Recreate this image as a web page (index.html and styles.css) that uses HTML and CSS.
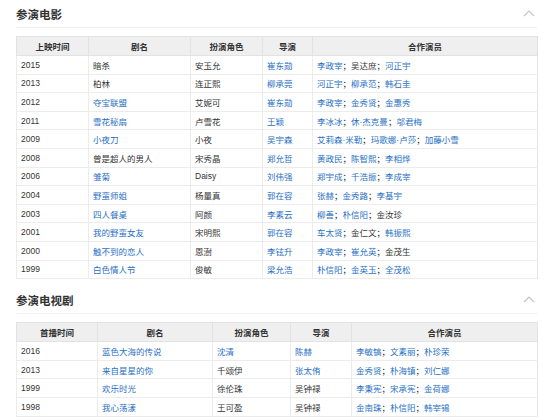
FILE: index.html
```html
<!DOCTYPE html>
<html lang="zh">
<head>
<meta charset="utf-8">
<title>参演作品</title>
<link rel="stylesheet" href="styles.css">
</head>
<body>
<div class="page">
  <section class="section">
    <div class="sec-head">
      <h2 class="sec-title">参演电影</h2>
      <svg class="chev" width="12" height="7" viewBox="0 0 12 7"><polyline points="1,6 6,1 11,6" fill="none" stroke="#c4c4c4" stroke-width="1.2"/></svg>
    </div>
    <table class="works">
      <colgroup><col class="m1"><col class="m2"><col class="m3"><col class="m4"><col class="m5"></colgroup>
      <thead><tr><th>上映时间</th><th>剧名</th><th>扮演角色</th><th>导演</th><th>合作演员</th></tr></thead>
      <tbody>
        <tr><td>2015</td><td>暗杀</td><td>安玉允</td><td><a>崔东勋</a></td><td><a>李政宰</a>；吴达庶；<a>河正宇</a></td></tr>
        <tr><td>2013</td><td>柏林</td><td>连正熙</td><td><a>柳承莞</a></td><td><a>河正宇</a>；<a>柳承范</a>；<a>韩石圭</a></td></tr>
        <tr><td>2012</td><td><a>夺宝联盟</a></td><td>艾妮可</td><td><a>崔东勋</a></td><td><a>李政宰</a>；<a>金秀贤</a>；<a>金惠秀</a></td></tr>
        <tr><td>2011</td><td><a>雪花秘扇</a></td><td>卢雪花</td><td><a>王颖</a></td><td><a>李冰冰</a>；<a>休·杰克曼</a>；<a>邬君梅</a></td></tr>
        <tr><td>2009</td><td><a>小夜刀</a></td><td>小夜</td><td><a>吴宇森</a></td><td><a>艾莉森·米勒</a>；<a>玛歌娜·卢莎</a>；<a>加藤小雪</a></td></tr>
        <tr><td>2008</td><td>曾是超人的男人</td><td>宋秀晶</td><td><a>郑允哲</a></td><td><a>黄政民</a>；<a>陈智熙</a>；<a>李相烨</a></td></tr>
        <tr><td>2006</td><td><a>雏菊</a></td><td>Daisy</td><td><a>刘伟强</a></td><td><a>郑宇成</a>；<a>千浩振</a>；<a>李成宰</a></td></tr>
        <tr><td>2004</td><td><a>野蛮师姐</a></td><td>杨量真</td><td><a>郭在容</a></td><td><a>张赫</a>；<a>金秀路</a>；<a>李基宇</a></td></tr>
        <tr><td>2003</td><td><a>四人餐桌</a></td><td>阿颜</td><td><a>李素云</a></td><td><a>柳善</a>；<a>朴信阳</a>；金汝珍</td></tr>
        <tr><td>2001</td><td><a>我的野蛮女友</a></td><td>宋明熙</td><td><a>郭在容</a></td><td><a>车太贤</a>；金仁文；<a>韩振熙</a></td></tr>
        <tr><td>2000</td><td><a>触不到的恋人</a></td><td>恩澍</td><td><a>李铉升</a></td><td><a>李政宰</a>；<a>崔允英</a>；金茂生</td></tr>
        <tr><td>1999</td><td><a>白色情人节</a></td><td>俊敏</td><td><a>梁允浩</a></td><td><a>朴信阳</a>；<a>金英玉</a>；<a>全茂松</a></td></tr>
      </tbody>
    </table>
  </section>
  <section class="section">
    <div class="sec-head">
      <h2 class="sec-title">参演电视剧</h2>
      <svg class="chev" width="12" height="7" viewBox="0 0 12 7"><polyline points="1,6 6,1 11,6" fill="none" stroke="#c4c4c4" stroke-width="1.2"/></svg>
    </div>
    <table class="works">
      <colgroup><col class="t1"><col class="t2"><col class="t3"><col class="t4"><col class="t5"></colgroup>
      <thead><tr><th>首播时间</th><th>剧名</th><th>扮演角色</th><th>导演</th><th>合作演员</th></tr></thead>
      <tbody>
        <tr><td>2016</td><td><a>蓝色大海的传说</a></td><td><a>沈清</a></td><td><a>陈赫</a></td><td><a>李敏镐</a>；<a>文素丽</a>；<a>朴珍荣</a></td></tr>
        <tr><td>2013</td><td><a>来自星星的你</a></td><td>千颂伊</td><td><a>张太侑</a></td><td><a>金秀贤</a>；<a>朴海镇</a>；<a>刘仁娜</a></td></tr>
        <tr><td>1999</td><td><a>欢乐时光</a></td><td>徐伦珠</td><td>吴钟禄</td><td><a>李秉宪</a>；<a>宋承宪</a>；<a>金荷娜</a></td></tr>
        <tr><td>1998</td><td><a>我心荡漾</a></td><td>王可盈</td><td>吴钟禄</td><td><a>金南珠</a>；<a>朴信阳</a>；<a>韩宰锡</a></td></tr>
      </tbody>
    </table>
  </section>
</div>
</body>
</html>
```

FILE: styles.css
```css
html, body {
  margin: 0;
  padding: 0;
  background: #fff;
}
body {
  font-family: "Liberation Sans", "Noto Sans CJK SC", sans-serif;
  color: #333;
}
.page {
  padding: 0 13px 0 16px;
}
.section {
  margin-bottom: 7px;
}
.sec-head {
  display: flex;
  justify-content: space-between;
  align-items: center;
  height: 27px;
  border-bottom: 1px solid #f1f1f1;
}
.sec-title {
  margin: 0;
  font-size: 11.5px;
  font-weight: bold;
  color: #333;
  font-family: "Noto Sans CJK SC", sans-serif;
}
.chev {
  margin-right: 2px;
}
.works {
  margin-top: 8px;
  width: 100%;
  table-layout: fixed;
  border-collapse: collapse;
  border: 1px solid #e4e4e4;
  font-size: 8.5px;
}
.works th {
  background: #efefef;
  font-weight: bold;
  color: #333;
  height: 18px;
  padding: 0 4px;
  text-align: center;
  border: 1px solid #e2e2e2;
}
.works td {
  height: 17.6px;
  padding: 0 4px;
  text-align: left;
  border-left: 1px solid #ececec;
  border-bottom: 1px solid #ececec;
  white-space: nowrap;
  overflow: hidden;
}
.works a {
  color: #1f6fc5;
  text-decoration: none;
}
.m1 { width: 72px; }
.m2 { width: 102px; }
.m3 { width: 72px; }
.m4 { width: 50px; }
.m5 { width: 225px; }
.t1 { width: 81px; }
.t2 { width: 115px; }
.t3 { width: 78px; }
.t4 { width: 61px; }
.t5 { width: 186px; }
```
